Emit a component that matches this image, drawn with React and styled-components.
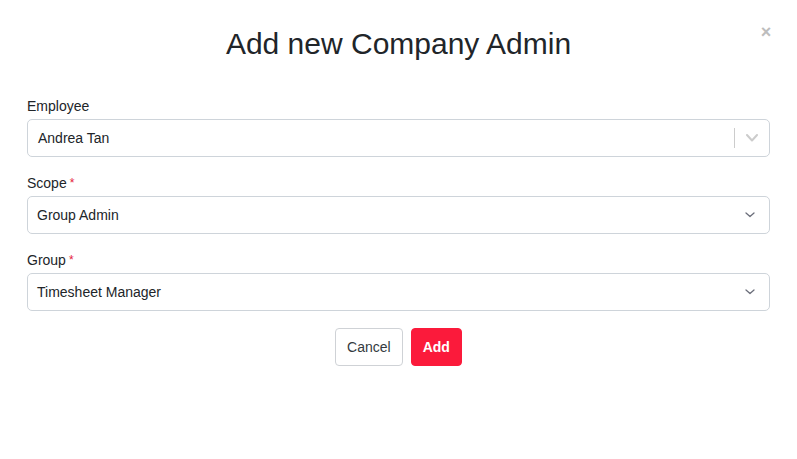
import React from "react";
import styled, { createGlobalStyle } from "styled-components";

const Global = createGlobalStyle`
  html, body { margin: 0; padding: 0; background: #fff; }
  body { font-family: "Liberation Sans", Arial, sans-serif; color: #212529; }
  * { box-sizing: border-box; }
`;

const Modal = styled.div`
  position: relative;
  width: 797px;
  height: 459px;
  padding: 24px 27px 0;
  background: #fff;
`;

const Close = styled.button`
  position: absolute;
  top: 24px;
  right: 24px;
  width: 14px;
  height: 16px;
  padding: 0;
  border: none;
  background: none;
  color: #bdbdbd;
  font-size: 18px;
  font-weight: 700;
  line-height: 16px;
  font-family: "Liberation Sans", Arial, sans-serif;
  cursor: pointer;
`;

const Title = styled.h2`
  margin: 0 0 34px;
  text-align: center;
  font-size: 30px;
  font-weight: 400;
  line-height: 40px;
  color: #212529;
`;

const Field = styled.div`
  display: flex;
  flex-direction: column;
  margin-bottom: 18px;
`;

const Label = styled.label`
  font-size: 14px;
  line-height: 17px;
  margin-bottom: 4px;
  color: #212529;
`;

const Req = styled.span`
  color: #e5213b;
  margin-left: 3px;
  font-size: 12px;
  vertical-align: top;
`;

const SelectBox = styled.div`
  display: flex;
  align-items: center;
  height: 38px;
  border: 1px solid #ced4da;
  border-radius: 5px;
  padding-left: ${(p) => (p.$indent ? "10px" : "9px")};
  font-size: 14px;
  color: #212529;
`;

const Value = styled.div`
  flex: 1;
`;

const Separator = styled.span`
  width: 1px;
  align-self: stretch;
  margin: 8px 0;
  background: #cccccc;
`;

const Indicator = styled.div`
  display: flex;
  align-items: center;
  justify-content: center;
  width: ${(p) => (p.$wide ? "34px" : "38px")};
`;

const Chevron = ({ color, w = 10, h = 6, sw = 1.6 }) => (
  <svg width={w + 2} height={h + 2} viewBox={`0 0 ${w + 2} ${h + 2}`} fill="none">
    <path
      d={`M1 1 L${(w + 2) / 2} ${h + 0.5} L${w + 1} 1`}
      stroke={color}
      strokeWidth={sw}
      strokeLinecap="round"
      strokeLinejoin="round"
    />
  </svg>
);

const Actions = styled.div`
  display: flex;
  justify-content: center;
  gap: 8px;
  margin-top: -1px;
`;

const Button = styled.button`
  height: 38px;
  padding: 0 11px;
  border-radius: 4px;
  font-size: 14px;
  font-family: "Liberation Sans", Arial, sans-serif;
  border: 1px solid ${(p) => (p.$primary ? "#fb1a3b" : "#cfd2d6")};
  background: ${(p) => (p.$primary ? "#fb1a3b" : "#fff")};
  color: ${(p) => (p.$primary ? "#fff" : "#343a40")};
  font-weight: ${(p) => (p.$primary ? 700 : 400)};
  cursor: pointer;
`;

export default function App() {
  return (
    <>
      <Global />
      <Modal>
        <Close aria-label="Close">×</Close>
        <Title>Add new Company Admin</Title>
        <Field>
          <Label>Employee</Label>
          <SelectBox $indent>
            <Value>Andrea Tan</Value>
            <Separator />
            <Indicator $wide>
              <Chevron color="#cccccc" w={10} h={6} sw={2} />
            </Indicator>
          </SelectBox>
        </Field>
        <Field>
          <Label>
            Scope<Req>*</Req>
          </Label>
          <SelectBox>
            <Value>Group Admin</Value>
            <Indicator>
              <Chevron color="#6b6e7a" w={8} h={4} sw={1.3} />
            </Indicator>
          </SelectBox>
        </Field>
        <Field>
          <Label>
            Group<Req>*</Req>
          </Label>
          <SelectBox>
            <Value>Timesheet Manager</Value>
            <Indicator>
              <Chevron color="#6b6e7a" w={8} h={4} sw={1.3} />
            </Indicator>
          </SelectBox>
        </Field>
        <Actions>
          <Button>Cancel</Button>
          <Button $primary>Add</Button>
        </Actions>
      </Modal>
    </>
  );
}
